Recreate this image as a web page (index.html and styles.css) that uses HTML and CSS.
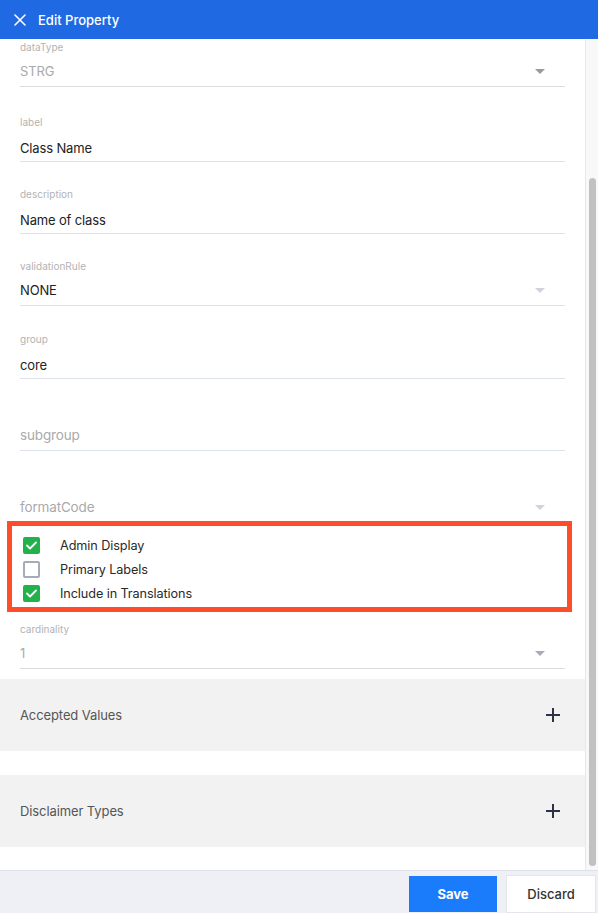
FILE: index.html
```html
<!DOCTYPE html>
<html>
<head>
<meta charset="utf-8">
<link rel="stylesheet" href="styles.css">
</head>
<body>
<div class="app">
  <header class="topbar">
    <svg class="close" width="12" height="12" viewBox="0 0 12 12"><path d="M1 1L11 11M11 1L1 11" stroke="#fff" stroke-width="1.6" stroke-linecap="round"/></svg>
    <span class="title">Edit Property</span>
  </header>
  <div class="middle">
    <div class="content">
      <div class="field first select disabled">
        <div class="flabel">dataType</div>
        <div class="fvalue"><span>STRG</span><span class="arrow dark"></span></div>
      </div>
      <div class="field second">
        <div class="flabel">label</div>
        <div class="fvalue"><span>Class Name</span></div>
      </div>
      <div class="field">
        <div class="flabel">description</div>
        <div class="fvalue"><span>Name of class</span></div>
      </div>
      <div class="field select">
        <div class="flabel">validationRule</div>
        <div class="fvalue"><span>NONE</span><span class="arrow"></span></div>
      </div>
      <div class="field wide">
        <div class="flabel">group</div>
        <div class="fvalue"><span>core</span></div>
      </div>
      <div class="field ph">
        <div class="flabel"></div>
        <div class="fvalue placeholder"><span>subgroup</span></div>
      </div>
      <div class="field ph bare">
        <div class="flabel"></div>
        <div class="fvalue placeholder"><span>formatCode</span><span class="arrow"></span></div>
      </div>
      <div class="checks">
        <div class="check"><span class="box on"><svg width="11" height="9" viewBox="0 0 11 9"><path d="M1 4.5L4 7.5L10 1.5" fill="none" stroke="#fff" stroke-width="1.8" stroke-linecap="round" stroke-linejoin="round"/></svg></span><span>Admin Display</span></div>
        <div class="check"><span class="box"></span><span>Primary Labels</span></div>
        <div class="check"><span class="box on"><svg width="11" height="9" viewBox="0 0 11 9"><path d="M1 4.5L4 7.5L10 1.5" fill="none" stroke="#fff" stroke-width="1.8" stroke-linecap="round" stroke-linejoin="round"/></svg></span><span>Include in Translations</span></div>
      </div>
      <div class="field after-checks select disabled">
        <div class="flabel">cardinality</div>
        <div class="fvalue"><span>1</span><span class="arrow mid"></span></div>
      </div>
      <div class="panel">
        <span>Accepted Values</span>
        <svg width="14" height="14" viewBox="0 0 14 14"><path d="M7 0V14M0 7H14" stroke="#2d3344" stroke-width="2"/></svg>
      </div>
      <div class="panel">
        <span>Disclaimer Types</span>
        <svg width="14" height="14" viewBox="0 0 14 14"><path d="M7 0V14M0 7H14" stroke="#2d3344" stroke-width="2"/></svg>
      </div>
    </div>
    <div class="scrollbar"><div class="thumb"></div></div>
  </div>
  <footer class="footer">
    <button class="btn save">Save</button>
    <button class="btn discard">Discard</button>
  </footer>
</div>
</body>
</html>
```

FILE: styles.css
```css
* { box-sizing: border-box; }
html, body { margin: 0; padding: 0; }
body {
  font-family: Inter, "Noto Sans", sans-serif;
  color: #222;
  background: #fff;
}
.app {
  display: flex;
  flex-direction: column;
  height: 913px;
  width: 598px;
  overflow: hidden;
}
.topbar {
  height: 39px;
  flex: none;
  background: #1f6ae3;
  display: flex;
  align-items: center;
  padding-left: 14px;
  gap: 12px;
}
.title {
  color: #fff;
  font-size: 13px;
  font-weight: 500;
}
.middle {
  flex: 1;
  display: flex;
  min-height: 0;
}
.content {
  flex: 1;
  display: flex;
  flex-direction: column;
  overflow: hidden;
}
.field {
  margin: 26px 20px 0;
  border-bottom: 1px solid #dde1ea;
  padding-bottom: 4px;
  flex: none;
}
.field.first { margin-top: 2px; }
.field.second { margin-top: 29px; }
.field.wide { margin-top: 27px; }
.field.ph { margin-top: 24px; padding-bottom: 6px; }
.field.bare { border-bottom-color: transparent; }
.field.disabled { border-bottom-color: #dcdcdc; }
.field.after-checks { margin-top: 11px; }
.flabel {
  height: 12px;
  line-height: 12px;
  font-size: 10px;
  color: #b3b3b3;
  margin-bottom: 11px;
}
.field.select { padding-bottom: 6px; }
.field.select .flabel { margin-bottom: 9px; }
.fvalue {
  height: 18px;
  line-height: 18px;
  font-size: 13px;
  letter-spacing: -0.15px;
  display: flex;
  justify-content: space-between;
  align-items: center;
  color: #222;
}
.disabled .fvalue { color: #aaa; }
.fvalue.placeholder { color: #aaa; font-size: 13.5px; }
.arrow {
  width: 0;
  height: 0;
  border-left: 5px solid transparent;
  border-right: 5px solid transparent;
  border-top: 5px solid #d0d3dc;
  margin-right: 20px;
}
.arrow.dark { border-top-color: #9a9a9a; }
.arrow.mid { border-top-color: #a9acb5; }
.checks {
  margin: -2px 13px 0 7px;
  border: 5px solid #fd4d2b;
  padding: 7px 0 2px 11px;
  display: flex;
  flex-direction: column;
  flex: none;
}
.check {
  height: 24px;
  display: flex;
  align-items: center;
  gap: 20px;
  font-size: 12.7px;
  letter-spacing: -0.1px;
  color: #2a2a2a;
}
.box {
  width: 17px;
  height: 17px;
  border-radius: 2px;
  border: 2px solid #a6abb9;
  display: flex;
  align-items: center;
  justify-content: center;
  flex: none;
}
.box.on {
  background: #22b24c;
  border-color: #22b24c;
}
.panel {
  height: 72px;
  background: #f2f2f2;
  display: flex;
  align-items: center;
  justify-content: space-between;
  padding: 0 25px 0 20px;
  font-size: 13px;
  letter-spacing: -0.1px;
  color: #555;
  margin-top: 24px;
  flex: none;
}
.field.after-checks + .panel { margin-top: 10px; }
.scrollbar {
  width: 13px;
  flex: none;
  background: #f8f8f8;
  border-left: 1px solid #e8e8e8;
  padding-top: 139px;
  padding-left: 3px;
}
.thumb {
  width: 7px;
  height: 688px;
  border-radius: 4px;
  background: #c1c1c1;
}
.footer {
  height: 43px;
  flex: none;
  background: #eef0f5;
  border-top: 1px solid #dfe2ea;
  display: flex;
  justify-content: flex-end;
  align-items: flex-start;
  gap: 10px;
  padding: 5px 3px 0 0;
}
.btn {
  height: 36px;
  font-family: Inter, "Noto Sans", sans-serif;
  font-size: 13px;
  border: none;
  padding: 0;
}
.save {
  width: 88px;
  background: #1a7cfb;
  color: #fff;
  font-weight: 700;
}
.discard {
  width: 88px;
  background: #fff;
  color: #333;
  font-weight: 500;
  box-shadow: 0 0 0 1px #e4e6ec;
}
```
